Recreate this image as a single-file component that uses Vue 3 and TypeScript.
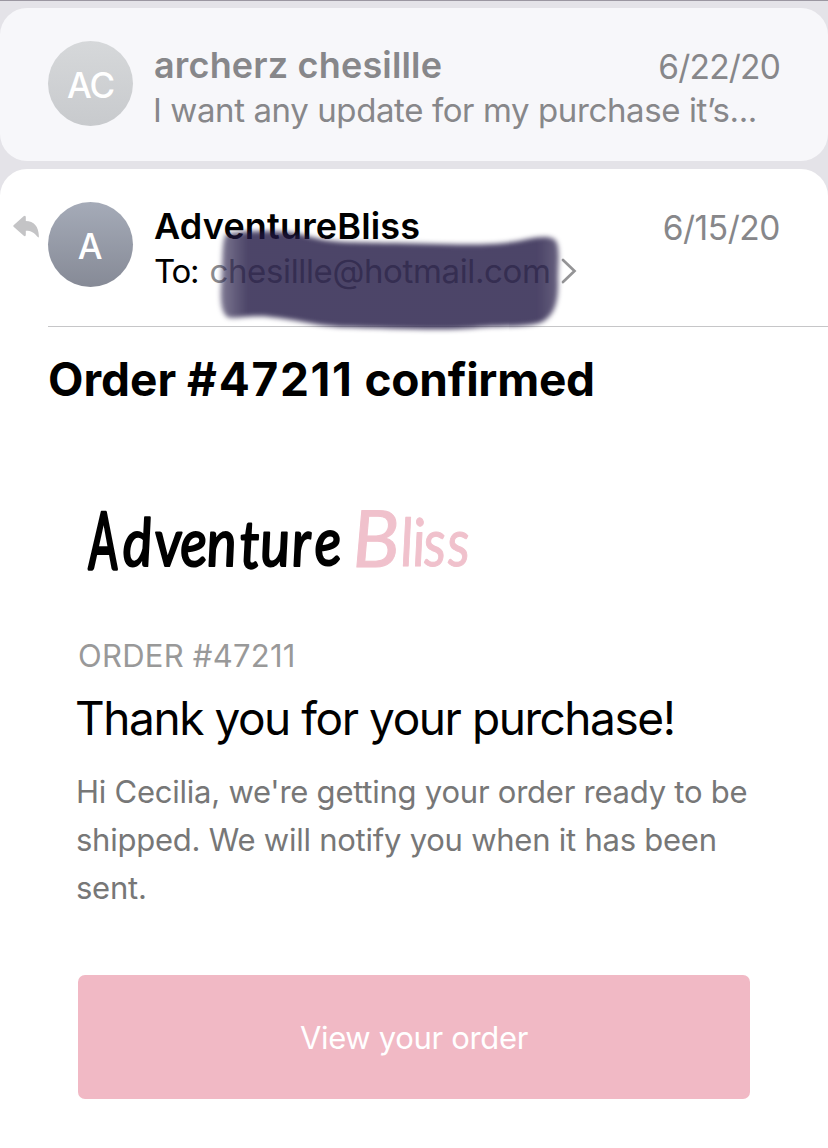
<script setup lang="ts">
interface Message {
  initials: string
  sender: string
  date: string
}

const previous: Message & { preview: string } = {
  initials: 'AC',
  sender: 'archerz chesillle',
  date: '6/22/20',
  preview: 'I want any update for my purchase it’s...',
}

const current: Message & { to: string; order: string } = {
  initials: 'A',
  sender: 'AdventureBliss',
  date: '6/15/20',
  to: 'chesillle@hotmail.com',
  order: '#47211',
}

const bodyLines: string[] = [
  "Hi Cecilia, we're getting your order ready to be",
  'shipped. We will notify you when it has been',
  'sent.',
]
</script>

<template>
  <main class="screen">
    <article class="card card-previous">
      <header class="row">
        <div class="avatar avatar-light">{{ previous.initials }}</div>
        <div class="info">
          <div class="sender sender-previous">{{ previous.sender }}</div>
          <div class="line preview">{{ previous.preview }}</div>
        </div>
        <time class="date date-previous">{{ previous.date }}</time>
      </header>
    </article>

    <article class="card card-current">
      <svg class="reply" width="28" height="26" viewBox="0 0 28 26" aria-hidden="true">
        <path
          d="M1.6 11.3 11.6 2.3Q13.6 .8 13.8 3.2V7.1C22 7.3 26.6 12.4 26.9 22.2Q26.8 24.4 25.2 22.6C22.4 18.4 19 16.8 13.8 16.7V20.7Q13.5 23.2 11.5 21.6L1.6 12.8Q.8 12 1.6 11.3Z"
          fill="#c4c4c6"
        />
      </svg>
      <header class="row row-current">
        <div class="avatar avatar-dark">{{ current.initials }}</div>
        <div class="info">
          <div class="sender sender-current">{{ current.sender }}</div>
          <div class="line recipient">
            <span class="to">To:</span>
            <span class="email">{{ current.to }}</span>
            <svg class="chevron" width="16" height="26" viewBox="0 0 16 26" aria-hidden="true">
              <path d="M2 2 13.5 13 2 24" fill="none" stroke="#949496" stroke-width="2.7" stroke-linecap="round" />
            </svg>
          </div>
        </div>
        <time class="date">{{ current.date }}</time>
      </header>
      <svg class="marker" width="370" height="120" viewBox="205 220 370 120" aria-hidden="true">
        <defs>
          <filter id="soft" x="-10%" y="-20%" width="120%" height="140%" color-interpolation-filters="sRGB">
            <feGaussianBlur stdDeviation="2.7" />
          </filter>
          <linearGradient id="ink" x1="0" x2="1" y1="0" y2="0">
            <stop offset="0" stop-color="#1f1642" stop-opacity=".58" />
            <stop offset=".08" stop-color="#1f1642" stop-opacity=".8" />
            <stop offset=".94" stop-color="#1f1642" stop-opacity=".8" />
            <stop offset="1" stop-color="#1f1642" stop-opacity=".68" />
          </linearGradient>
        </defs>
        <path
          d="M226 234C250 230 282 230 304 235C328 243 350 242 384 243C430 243 480 247 512 242C530 239 545 234 554 239C561 244 558 262 558 280C559 302 554 316 542 322C528 328 500 325 474 328C440 331 390 328 340 327C312 325 294 319 270 317C252 315 242 318 230 318C221 316 220 300 221 286C223 266 221 242 226 234Z"
          fill="url(#ink)"
          filter="url(#soft)"
        />
      </svg>

      <h1 class="subject">Order <span class="subject-number">{{ current.order }}</span> <span class="subject-state">confirmed</span></h1>

      <section class="mail">
        <svg class="logo" width="420" height="100" viewBox="0 0 420 100" role="img" aria-label="Adventure Bliss">
          <text class="word dark tall heavy" transform="translate(20 79) skewX(3) scale(.58 1)">A</text>
          <text
            class="word dark"
            transform="translate(0 76) skewX(3) scale(.85 1)"
            x="63 101 131 162 201 225 262 289"
            y="0 0 0 0 2 0 0 -1"
          >dventure</text>
          <text class="word pink tall" transform="translate(283 77) skewX(2) scale(1 1)">B</text>
          <text
            class="word pink"
            transform="translate(0 76) skewX(3) scale(.85 1)"
            x="390 404 417 445"
          >liss</text>
        </svg>
        <div class="order-no">ORDER {{ current.order }}</div>
        <h2 class="thanks">Thank you for your purchase!</h2>
        <p class="body">
          <span v-for="text in bodyLines" :key="text" class="body-line">{{ text }}</span>
        </p>
        <a class="button">View your order</a>
      </section>
    </article>
  </main>
</template>

<style>
body {
  margin: 0;
  background: #e4e3e8;
}
</style>

<style scoped>
.screen {
  box-sizing: border-box;
  width: 828px;
  height: 1148px;
  overflow: hidden;
  display: flex;
  flex-direction: column;
  gap: 8px;
  padding-top: 7px;
  border-top: 1px solid #9b97a1;
  background: #e4e3e8;
  font-family: Inter, 'Liberation Sans', sans-serif;
  color: #000;
}

.card {
  box-sizing: border-box;
  position: relative;
  padding: 33px 0 0 48px;
}

.card-previous {
  height: 153px;
  border-radius: 27px;
  background: #f7f7fa;
}

.card-current {
  flex: 1;
  border-radius: 27px 27px 0 0;
  background: #fff;
}

.row {
  display: flex;
  align-items: flex-start;
  padding-right: 48px;
}

.row-current {
  box-sizing: border-box;
  height: 125px;
  border-bottom: 1px solid #c6c6c8;
}

.avatar {
  box-sizing: border-box;
  flex: none;
  width: 85px;
  height: 85px;
  padding-top: 3px;
  border-radius: 50%;
  display: flex;
  align-items: center;
  justify-content: center;
  color: #fff;
  font-size: 35px;
  font-weight: 500;
  letter-spacing: -1.2px;
}

.avatar-light {
  background: linear-gradient(#d6d8da, #c8cacd);
}

.avatar-dark {
  padding-right: 2px;
  background: linear-gradient(#a5abb8, #868a96);
}

.info {
  flex: 1;
  min-width: 0;
  margin: 2px 0 0 21px;
  white-space: nowrap;
}

.sender {
  height: 45px;
  line-height: 45px;
  font-size: 36px;
  font-weight: 600;
  letter-spacing: 0.17px;
}

.sender-previous {
  color: #87878a;
}

.line {
  height: 44px;
  line-height: 44px;
  font-size: 33px;
}

.preview {
  margin-left: -1px;
  color: #87878a;
  letter-spacing: -0.4px;
}

.recipient {
  display: flex;
  align-items: center;
}

.to {
  letter-spacing: -1.2px;
}

.email {
  margin-left: 11px;
  color: #8a8a8e;
  letter-spacing: -0.36px;
}

.chevron {
  margin-left: 10px;
}

.date {
  flex: none;
  margin-top: 4px;
  line-height: 44px;
  font-size: 33.5px;
  letter-spacing: -0.45px;
  color: #87878a;
}

.date-previous {
  letter-spacing: -0.8px;
}

.reply {
  position: absolute;
  left: 12px;
  top: 45px;
}

.marker {
  position: absolute;
  left: 205px;
  top: 51px;
}

.subject {
  margin: 24px 0 0;
  font-size: 46px;
  line-height: 56px;
  font-weight: 700;
  white-space: nowrap;
}

.subject-number {
  letter-spacing: 1.7px;
}

.subject-state {
  letter-spacing: -0.25px;
}

.mail {
  padding: 83px 78px 0 28px;
  display: flex;
  flex-direction: column;
}

.logo {
  margin-left: -6px;
}

.word {
  font-family: Lato, 'Open Sans', sans-serif;
  font-style: italic;
  font-size: 66px;
  stroke-linejoin: round;
}

.tall {
  font-size: 79px;
}

.dark {
  fill: #000;
  stroke: #000;
  stroke-width: 2.2px;
}

.heavy {
  stroke-width: 3.4px;
}

.pink {
  fill: #f0c1cc;
  stroke: #f0c1cc;
  stroke-width: 1px;
}

.order-no {
  margin: 46px 0 0 2px;
  font-size: 31px;
  line-height: 40px;
  letter-spacing: 0.25px;
  color: #999;
}

.thanks {
  margin: 14px 0 0 -1px;
  font-size: 46px;
  line-height: 56px;
  font-weight: 400;
  letter-spacing: -1.44px;
  white-space: nowrap;
}

.body {
  margin: 22px 0 0;
  font-size: 31px;
  line-height: 48px;
  letter-spacing: -0.24px;
  color: #777;
  white-space: nowrap;
}

.body-line {
  display: block;
}

.button {
  margin: 63px 0 0 2px;
  height: 124px;
  border-radius: 7px;
  display: flex;
  align-items: center;
  justify-content: center;
  background: #f1b9c5;
  color: #fff;
  font-size: 31px;
  letter-spacing: -0.33px;
}
</style>
